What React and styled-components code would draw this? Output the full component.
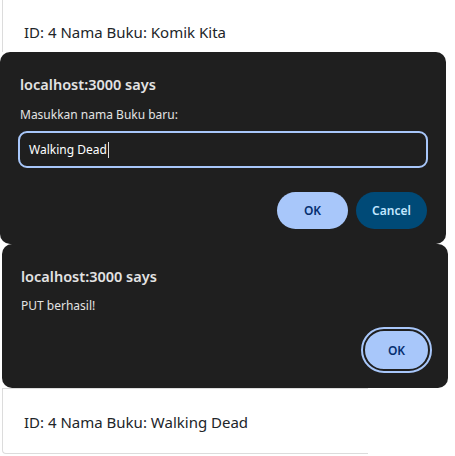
import React from 'react'
import styled, { createGlobalStyle } from 'styled-components'

const GlobalStyle = createGlobalStyle`
	body {
		margin: 0;
		background: #ffffff;
		font-family: 'Noto Sans', 'Open Sans', sans-serif;
	}
`

const Page = styled.div`
	width: 455px;
	height: 456px;
	display: flex;
	flex-direction: column;
	overflow: hidden;
`
const BookCard = styled.div`
	margin-left: 2px;
	width: ${(p) => p.width}px;
	height: ${(p) => p.height}px;
	box-sizing: border-box;
	border-left: 1px solid #dcdcdc;
	border-top: ${(p) => (p.top ? '1px solid #dcdcdc' : 'none')};
	border-bottom: ${(p) => (p.bottom ? '1px solid #dcdcdc' : 'none')};
	border-bottom-left-radius: ${(p) => (p.bottom ? '4px' : '0')};
	padding: ${(p) => p.pad};
	font-size: 15px;
	color: #212529;
`
const Dialog = styled.div`
	margin-left: ${(p) => p.left}px;
	width: 446px;
	height: ${(p) => p.height}px;
	box-sizing: border-box;
	background: #1f1f1f;
	border-radius: 10px;
	padding: ${(p) => p.pad};
	display: flex;
	flex-direction: column;
	color: #e3e3e3;
	position: relative;
	z-index: ${(p) => p.z};
`
const Title = styled.div`
	font-size: 14.5px;
	font-weight: 600;
	line-height: 20px;
	color: #e3e3e3;
`
const Message = styled.div`
	font-size: 12px;
	line-height: 16px;
	margin-top: ${(p) => p.gap}px;
`
const Input = styled.div`
	margin-top: 8px;
	margin-left: -2px;
	width: 410px;
	height: 37px;
	box-sizing: border-box;
	border: 2px solid #a8c7fa;
	border-radius: 9px;
	padding: 0 9px;
	display: flex;
	align-items: center;
	font-size: 12px;
	color: #ffffff;
`
const Caret = styled.span`
	display: inline-block;
	width: 1px;
	height: 16px;
	background: #e3e3e3;
	margin-left: 1px;
`
const Actions = styled.div`
	margin-top: auto;
	display: flex;
	justify-content: flex-end;
	gap: 8px;
`
const Button = styled.button`
	height: ${(p) => (p.focused ? 42 : 37)}px;
	min-width: ${(p) => (p.focused ? 67 : 71)}px;
	box-sizing: border-box;
	border: ${(p) => (p.focused ? '2px solid #1f1f1f' : 'none')};
	outline: ${(p) => (p.focused ? '2px solid #a8c7fa' : 'none')};
	border-radius: 999px;
	background: ${(p) => (p.primary ? '#a8c7fa' : '#004a77')};
	color: ${(p) => (p.primary ? '#062e6f' : '#c2e7ff')};
	font-family: inherit;
	font-size: 12px;
	font-weight: 600;
	padding: 0 14px;
`

export default function App() {
	return (
		<Page>
			<GlobalStyle />
			<BookCard width={453} height={52} pad="22px 0 0 21px">
				ID: 4 Nama Buku: Komik Kita
			</BookCard>
			<Dialog left={0} height={192} pad="22px 19px 15px 20px" z={1}>
				<Title>localhost:3000 says</Title>
				<Message gap={13}>Masukkan nama Buku baru:</Message>
				<Input>
					Walking Dead
					<Caret />
				</Input>
				<Actions>
					<Button primary>OK</Button>
					<Button>Cancel</Button>
				</Actions>
			</Dialog>
			<Dialog left={2} height={144} pad="22px 18px 17px 19px" z={2}>
				<Title>localhost:3000 says</Title>
				<Message gap={12}>PUT berhasil!</Message>
				<Actions>
					<Button primary focused>
						OK
					</Button>
				</Actions>
			</Dialog>
			<BookCard width={366} height={66} top bottom pad="23px 0 0 21px">
				ID: 4 Nama Buku: Walking Dead
			</BookCard>
		</Page>
	)
}
